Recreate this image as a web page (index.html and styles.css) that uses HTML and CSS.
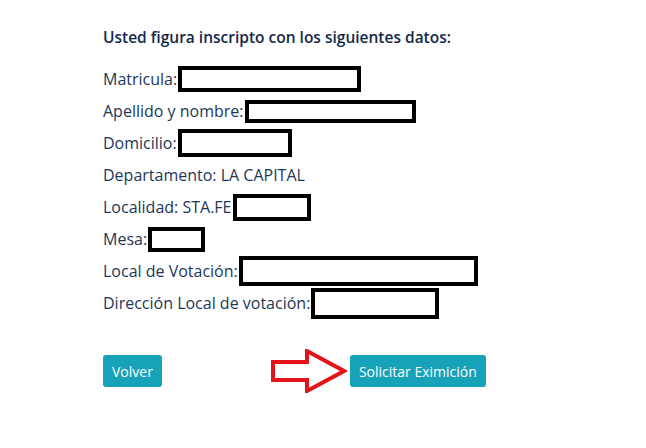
FILE: index.html
```html
<!DOCTYPE html>
<html lang="es">
<head>
  <meta charset="UTF-8" />
  <title>Eximición</title>
  <link rel="stylesheet" href="styles.css">
</head>
<body>

  <div class="datos">
    <h3>Usted figura inscripto con los siguientes datos:</h3>

    <div class="fila">Matricula:<span class="tapado" style="width:183px;height:26px"></span></div>
    <div class="fila">Apellido y nombre:<span class="tapado" style="width:171px;height:23px"></span></div>
    <div class="fila">Domicilio:<span class="tapado" style="width:114px;height:28px"></span></div>
    <div class="fila">Departamento: LA CAPITAL</div>
    <div class="fila">Localidad: STA.FE<span class="tapado" style="width:78px;height:27px"></span></div>
    <div class="fila">Mesa:<span class="tapado" style="width:57px;height:25px"></span></div>
    <div class="fila">Local de Votación:<span class="tapado" style="width:239px;height:30px"></span></div>
    <div class="fila">Dirección Local de votación:<span class="tapado" style="width:128px;height:31px"></span></div>

    <div class="acciones">
      <button class="btn">Volver</button>
      <svg class="flecha" width="76" height="44" viewBox="0 0 76 44">
        <polygon points="2,13 36,13 36,2 73,22 36,42 36,31 2,31" fill="none" stroke="#e3141b" stroke-width="4" />
      </svg>
      <button class="btn">Solicitar Eximición</button>
    </div>
  </div>

</body>
</html>
```

FILE: styles.css
```css
body {
  margin: 0;
  font-family: 'Open Sans', sans-serif;
  background: #fff;
  color: #1d3757;
}

.datos {
  padding: 26px 0 0 103px;
}

h3 {
  margin: 0 0 15px;
  font-size: 15.5px;
  font-weight: 600;
  color: #14294a;
}

.fila {
  display: flex;
  align-items: center;
  height: 32px;
  font-size: 16px;
}

.tapado {
  display: inline-block;
  box-sizing: border-box;
  border: 4px solid #000;
  background: #fff;
  margin-left: 1px;
}

.acciones {
  display: flex;
  align-items: center;
  margin-top: 30px;
}

.btn {
  background: #17a2b8;
  color: #fff;
  border: none;
  border-radius: 3px;
  font-family: 'Open Sans', sans-serif;
  font-size: 14px;
  padding: 0 9px;
  height: 32px;
  cursor: pointer;
}

.flecha {
  margin-left: 109px;
  margin-right: 3px;
}
```
